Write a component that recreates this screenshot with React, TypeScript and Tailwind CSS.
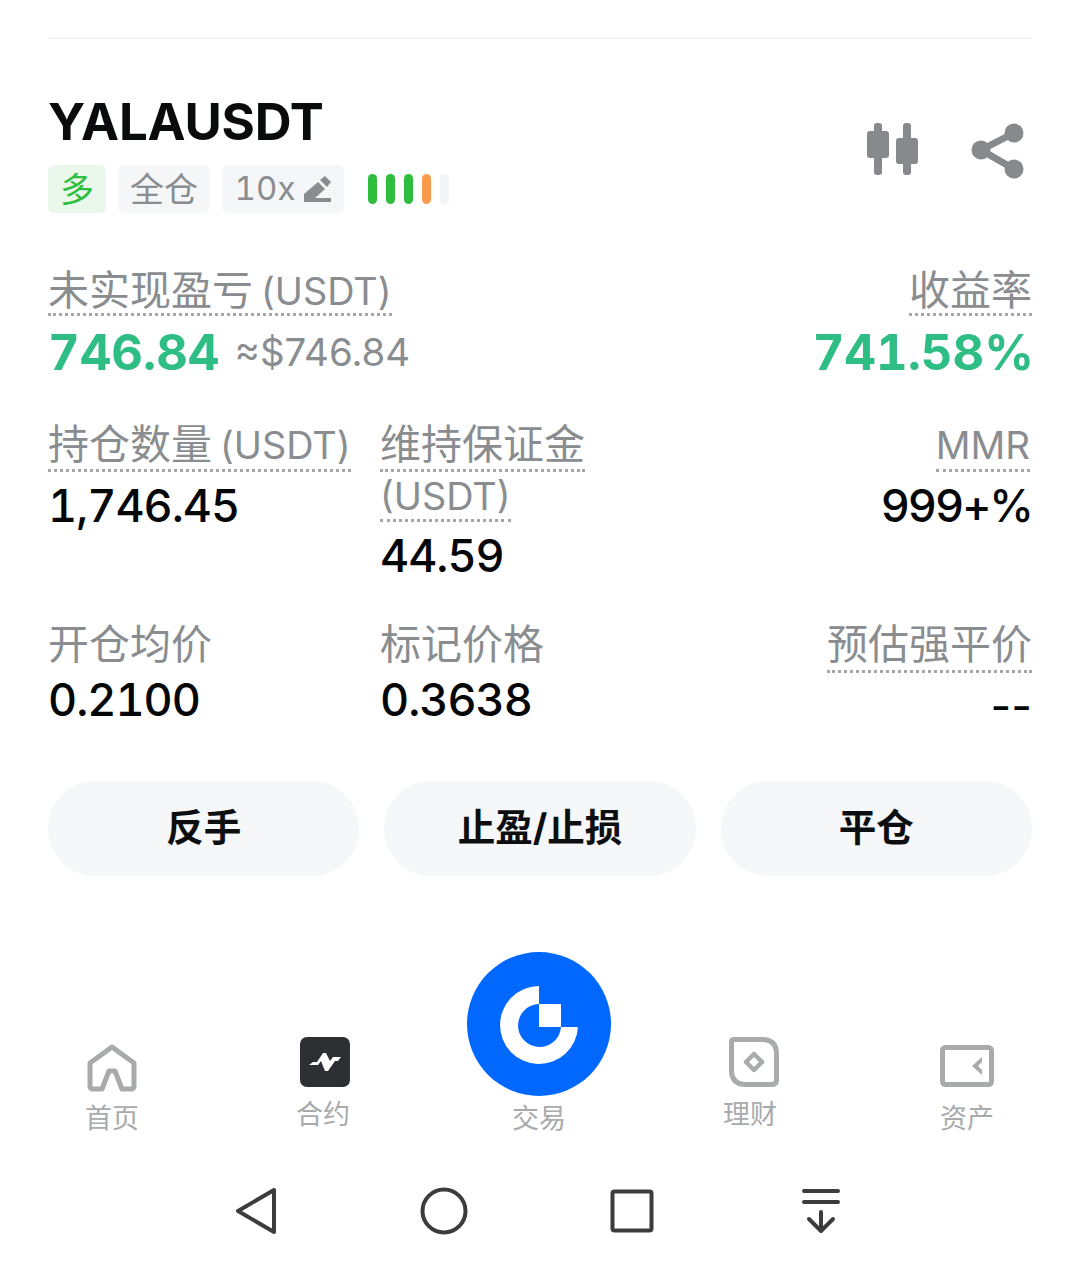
const FONT = "font-['Inter','Noto_Sans_CJK_SC',sans-serif]";

function Dotted({ children, className = "h-[51px]" }: { children: React.ReactNode; className?: string }) {
  return (
    <span className={`block w-fit border-b-[3px] border-dotted border-[#a4a7aa] leading-[46px] text-[#8a8d90] text-[41px] whitespace-nowrap ${className}`}>
      {children}
    </span>
  );
}

function Usdt({ gap = true }: { gap?: boolean }) {
  return <span className={`text-[37.8px] ${gap ? "ml-[8px]" : ""}`}>(USDT)</span>;
}

function Value({ children, className = "mt-[3px] leading-[62px]" }: { children: React.ReactNode; className?: string }) {
  return <div className={`text-[45px] tabular-nums tracking-[-1px] text-[#050607] font-[450] ${className}`}>{children}</div>;
}

function Candles() {
  return (
    <svg width="54" height="54" viewBox="0 0 54 54" fill="#88898c">
      <rect x="8" y="0" width="8" height="52" rx="3" />
      <rect x="1" y="8" width="22" height="27" rx="3" />
      <rect x="37" y="0" width="8" height="52" rx="3" />
      <rect x="30" y="15" width="22" height="26" rx="3" />
    </svg>
  );
}

function Share() {
  return (
    <svg width="54" height="56" viewBox="0 0 54 56" fill="#88898c">
      <circle cx="43" cy="10" r="9.5" />
      <circle cx="10" cy="27" r="9.5" />
      <circle cx="43" cy="46" r="9.5" />
      <path d="M10 27 L43 10 M10 27 L43 46" stroke="#88898c" strokeWidth="7" />
    </svg>
  );
}

function Pencil() {
  return (
    <svg width="27" height="26" viewBox="0 0 27 26" fill="#8a8d90">
      <path d="M0 18 L14 6 L21 13 L10 23 L0 23 Z" />
      <path d="M16 4 L21 0 L27 6 L23 11 Z" />
      <rect x="0" y="22" width="27" height="4" />
    </svg>
  );
}

function Home() {
  return (
    <svg width="50" height="48" viewBox="0 0 50 48" fill="none" stroke="#a8aaac" strokeWidth="5" strokeLinejoin="round">
      <path d="M3 19 L25 3 L47 19 V42 Q47 45 44 45 H35 L28 27 H22 L15 45 H6 Q3 45 3 42 Z" />
    </svg>
  );
}

function Contract() {
  return (
    <div className="w-[50px] h-[50px] rounded-[7px] bg-[#2e2f33] flex items-center justify-center">
      <svg width="32" height="18" viewBox="0 0 32 18" fill="#ffffff">
        <path d="M0 12 L4 9 H8 L14 0 H17 L21 8 L24 4 H32 L29 8 H26 L19 18 H16 L12 8 L9 12 Z" />
      </svg>
    </div>
  );
}

function Logo() {
  return (
    <svg width="144" height="144" viewBox="0 0 144 144">
      <circle cx="72" cy="72" r="72" fill="#0068ff" />
      <path d="M72 34 A39 39 0 1 0 111 75 H94 A21.5 21.5 0 1 1 72 52 V75 H94 V52 H72 Z" fill="#ffffff" />
    </svg>
  );
}

function Finance() {
  return (
    <svg width="50" height="50" viewBox="0 0 50 50" fill="none" stroke="#a8aaac" strokeWidth="5" strokeLinejoin="round">
      <path d="M5 2.5 H33 Q47.5 2.5 47.5 17 V43 Q47.5 47.5 43 47.5 H17 Q2.5 47.5 2.5 33 V5 Q2.5 2.5 5 2.5 Z" />
      <path d="M25 17 L33 25 L25 33 L17 25 Z" strokeWidth="4.5" />
    </svg>
  );
}

function Assets() {
  return (
    <svg width="54" height="42" viewBox="0 0 54 42" fill="none">
      <rect x="2.5" y="2.5" width="49" height="37" rx="3" stroke="#a8aaac" strokeWidth="5" />
      <path d="M42 12 V17 L38 21 L42 25 V30 L32 21 Z" fill="#a8aaac" />
    </svg>
  );
}

function NavItem({ icon, label, className }: { icon: React.ReactNode; label: string; className: string }) {
  return (
    <div className={`w-[60px] flex flex-col items-center text-[27px] leading-[34px] text-[#a8aaac] ${className}`}>
      {icon}
      <span className="whitespace-nowrap">{label}</span>
    </div>
  );
}

function Btn({ children }: { children: React.ReactNode }) {
  return (
    <button className="flex-1 h-[95px] rounded-[48px] bg-[#f5f7f8] text-[37.5px] font-bold text-[#0c0e0f] flex items-center justify-center">
      {children}
    </button>
  );
}

export default function App() {
  return (
    <div className={`w-[1080px] h-[1269px] bg-white overflow-hidden ${FONT}`}>
      <div className="pt-[37px] px-[48px]">
        <div className="h-[2px] bg-[#f2f3f4]" />

        <div className="mt-[51px] flex justify-between">
          <div>
            <div className="text-[51px] leading-[64px] font-bold text-[#0a0b0c] tracking-[-0.2px]">YALAUSDT</div>
            <div className="mt-[11px] flex items-center">
              <div className="w-[58px] h-[48px] rounded-[6px] bg-[#eaf8ec] text-[#2ebd3c] text-[34px] flex items-center justify-center">多</div>
              <div className="ml-[12px] w-[92px] h-[48px] rounded-[6px] bg-[#f5f6f7] text-[#8a8d90] text-[34px] flex items-center justify-center">全仓</div>
              <div className="ml-[12px] w-[122px] h-[48px] rounded-[6px] bg-[#f5f6f7] text-[#8a8d90] text-[33px] tabular-nums flex items-center justify-center gap-[9px]">
                10x
                <Pencil />
              </div>
              <div className="ml-[24px] flex gap-[9px]">
                <span className="w-[9px] h-[30px] rounded-full bg-[#2ebd3c]" />
                <span className="w-[9px] h-[30px] rounded-full bg-[#2ebd3c]" />
                <span className="w-[9px] h-[30px] rounded-full bg-[#2ebd3c]" />
                <span className="w-[9px] h-[30px] rounded-full bg-[#f99a4b]" />
                <span className="w-[9px] h-[30px] rounded-full bg-[#f3f4f5]" />
              </div>
            </div>
          </div>
          <div className="mt-[33px] pr-[7px] flex gap-[51px] h-[56px] items-start">
            <Candles />
            <Share />
          </div>
        </div>

        <div className="mt-[54px] flex justify-between">
          <div>
            <Dotted className="h-[49px]">
              未实现盈亏
              <Usdt />
            </Dotted>
            <div className="mt-[5px] flex items-center">
              <span className="text-[49px] leading-[64px] font-bold tabular-nums text-[#2dbd85]">746.84</span>
              <span className="ml-[15px] text-[38.4px] text-[#8a8d90]">≈$746.84</span>
            </div>
          </div>
          <div className="flex flex-col items-end">
            <Dotted className="h-[49px]">收益率</Dotted>
            <span className="mt-[5px] -mr-[2px] text-[49px] leading-[64px] font-bold tabular-nums text-[#2dbd85]">741.58%</span>
          </div>
        </div>

        <div className="mt-[36px] grid grid-cols-[332px_1fr_auto]">
          <div>
            <Dotted>
              持仓数量
              <Usdt />
            </Dotted>
            <Value>1,746.45</Value>
          </div>
          <div>
            <Dotted>维持保证金</Dotted>
            <Dotted className="h-[50px]">
              <Usdt gap={false} />
            </Dotted>
            <Value>44.59</Value>
          </div>
          <div className="flex flex-col items-end">
            <Dotted className="h-[51px] mr-[2px]">
              <span className="text-[38.5px]">MMR</span>
            </Dotted>
            <Value className="mt-[3px] leading-[62px] tracking-[-2px]">999+%</Value>
          </div>
        </div>

        <div className="mt-[34px] grid grid-cols-[332px_1fr_auto]">
          <div>
            <div className="text-[41px] leading-[46px] text-[#8a8d90]">开仓均价</div>
            <Value className="mt-[3px] leading-[60px]">0.2100</Value>
          </div>
          <div>
            <div className="text-[41px] leading-[46px] text-[#8a8d90]">标记价格</div>
            <Value className="mt-[3px] leading-[60px]">0.3638</Value>
          </div>
          <div className="flex flex-col items-end">
            <Dotted className="h-[52px]">预估强平价</Dotted>
            <div className="mt-[3px] text-[45px] leading-[60px] text-[#050607]">--</div>
          </div>
        </div>

        <div className="mt-[45px] flex gap-[25px]">
          <Btn>反手</Btn>
          <Btn>止盈/止损</Btn>
          <Btn>平仓</Btn>
        </div>
      </div>

      <div className="h-[202px] mt-[60px] pl-[82px] flex items-end">
        <NavItem icon={<div className="mb-[10px]"><Home /></div>} label="首页" className="pb-[2px]" />
        <NavItem icon={<div className="mb-[11px] ml-[3px]"><Contract /></div>} label="合约" className="ml-[151px] pb-[6px]" />
        <div className="ml-[114px] w-[144px] flex flex-col items-center text-[27px] leading-[34px] text-[#a8aaac] pb-[2px]">
          <Logo />
          <span className="mt-[6px]">交易</span>
        </div>
        <NavItem icon={<div className="mb-[11px] ml-[7px]"><Finance /></div>} label="理财" className="ml-[109px] pb-[6px]" />
        <NavItem icon={<div className="mb-[15px]"><Assets /></div>} label="资产" className="ml-[157px] pb-[2px]" />
      </div>

      <div className="mt-[49px] pl-[235px] flex items-center">
        <svg width="46" height="48" viewBox="0 0 46 48" fill="none" stroke="#3c3c3c" strokeWidth="4" strokeLinejoin="round">
          <path d="M39 3 V45 L3 24 Z" />
        </svg>
        <svg className="ml-[139px]" width="48" height="48" viewBox="0 0 48 48" fill="none" stroke="#3c3c3c" strokeWidth="4">
          <circle cx="24" cy="24" r="21.5" />
        </svg>
        <svg className="ml-[142px]" width="44" height="44" viewBox="0 0 44 44" fill="none" stroke="#3c3c3c" strokeWidth="4" strokeLinejoin="round">
          <rect x="2.5" y="2.5" width="39" height="39" rx="2" />
        </svg>
        <svg className="ml-[147px]" width="40" height="46" viewBox="0 0 40 46" fill="none" stroke="#3c3c3c" strokeWidth="4" strokeLinecap="round" strokeLinejoin="round">
          <path d="M3 3 H37 M3 14 H37 M20 24 V43 M8 31 L20 43 L32 31" />
        </svg>
      </div>
    </div>
  );
}
